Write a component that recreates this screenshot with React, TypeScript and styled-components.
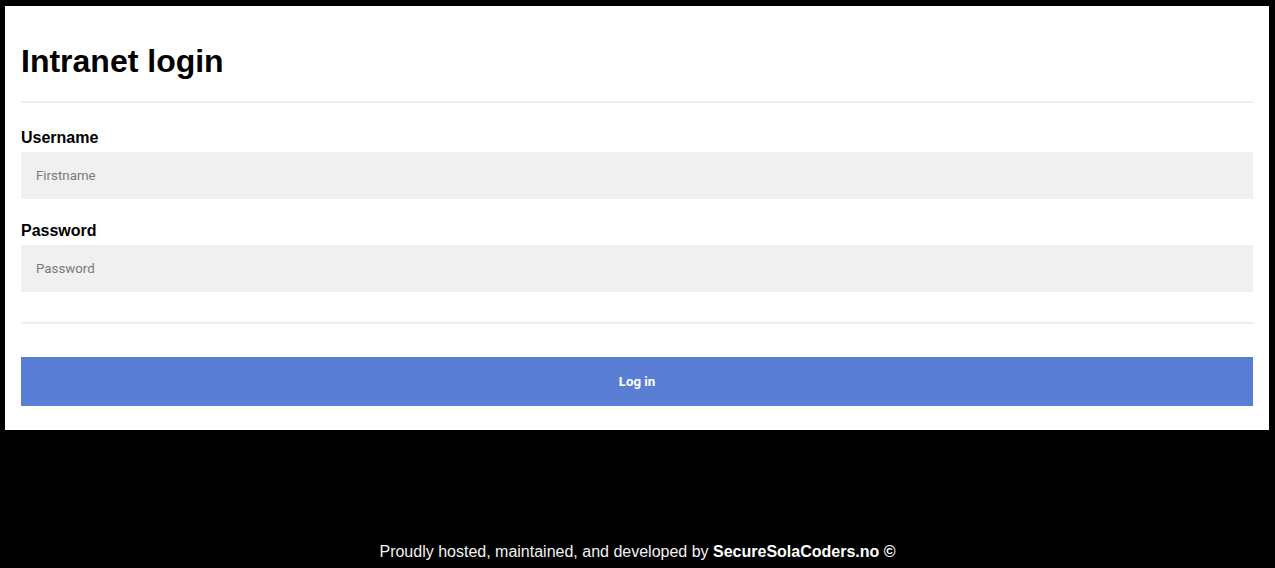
import styled, { createGlobalStyle } from "styled-components";

const GlobalStyle = createGlobalStyle`
  html, body {
    margin: 0;
    padding: 0;
    background: #000;
    font-family: "Liberation Sans", Arial, sans-serif;
  }
`;

const Page = styled.div`
  min-height: 568px;
  display: flex;
  flex-direction: column;
`;

const Card = styled.form`
  margin: 6px 6px 0 5px;
  padding: 37px 16px 24px;
  background: #fff;
  display: flex;
  flex-direction: column;
`;

const Title = styled.h1`
  margin: 0;
  font-size: 32px;
  line-height: 37px;
  font-weight: bold;
  color: #000;
`;

const Divider = styled.div<{ $top: number }>`
  height: 2px;
  background: #eee;
  margin-top: ${(p) => p.$top}px;
`;

const Field = styled.div<{ $top: number }>`
  display: flex;
  flex-direction: column;
  gap: 5px;
  margin-top: ${(p) => p.$top}px;
`;

const Label = styled.label`
  font-size: 16px;
  line-height: 18px;
  font-weight: bold;
  color: #000;
`;

const Input = styled.input`
  height: 47px;
  box-sizing: border-box;
  border: none;
  outline: none;
  background: #f0f0f0;
  padding: 0 15px;
  font-family: Roboto, "Noto Sans", sans-serif;
  font-size: 13.3px;
  color: #333;
  &::placeholder {
    color: #7a7a7a;
  }
`;

const Button = styled.button`
  margin-top: 33px;
  height: 49px;
  border: none;
  background: #597ed4;
  color: #fff;
  font-family: Roboto, "Noto Sans", sans-serif;
  font-size: 13.3px;
  font-weight: bold;
  cursor: pointer;
`;

const Footer = styled.footer`
  margin-top: 113px;
  text-align: center;
  color: #f2f2f2;
  font-size: 16px;
  line-height: 18px;
  b {
    color: #fff;
  }
`;

export default function App() {
  return (
    <Page>
      <GlobalStyle />
      <Card onSubmit={(e) => e.preventDefault()}>
        <Title>Intranet login</Title>
        <Divider $top={21} />
        <Field $top={26}>
          <Label htmlFor="username">Username</Label>
          <Input id="username" placeholder="Firstname" />
        </Field>
        <Field $top={23}>
          <Label htmlFor="password">Password</Label>
          <Input id="password" type="password" placeholder="Password" />
        </Field>
        <Divider $top={30} />
        <Button type="submit">Log in</Button>
      </Card>
      <Footer>
        Proudly hosted, maintained, and developed by <b>SecureSolaCoders.no ©</b>
      </Footer>
    </Page>
  );
}
